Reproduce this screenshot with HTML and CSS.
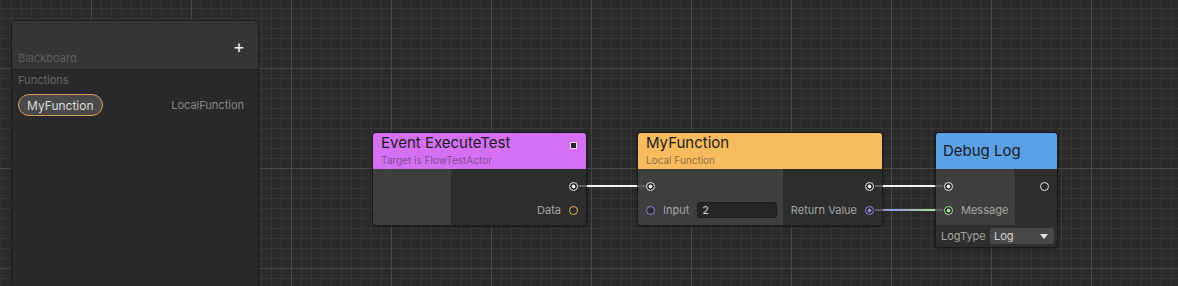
FILE: index.html
```html
<!DOCTYPE html>
<html lang="en">
<head>
  <meta charset="UTF-8" />
  <title>Flow Graph</title>
  <link rel="stylesheet" href="styles.css">
</head>
<body>
  <div class="graph">

    <!-- blackboard panel -->
    <aside class="blackboard">
      <div class="bb-header">
        <span class="bb-title">Blackboard</span>
        <span class="bb-add">+</span>
      </div>
      <div class="bb-body">
        <div class="bb-section">Functions</div>
        <div class="bb-row">
          <span class="bb-pill">MyFunction</span>
          <span class="bb-type">LocalFunction</span>
        </div>
      </div>
    </aside>

    <!-- nodes -->
    <div class="node node-event">
      <div class="node-header">
        <div class="titles">
          <div class="node-title">Event ExecuteTest</div>
          <div class="node-sub">Target is FlowTestActor</div>
        </div>
        <span class="node-flag"></span>
      </div>
      <div class="node-body">
        <div class="col col-in"></div>
        <div class="col col-out">
          <div class="row"><span class="port exec linked"></span></div>
          <div class="row"><span class="label">Data</span><span class="port yellow"></span></div>
        </div>
      </div>
    </div>

    <div class="node node-func">
      <div class="node-header">
        <div class="titles">
          <div class="node-title">MyFunction</div>
          <div class="node-sub">Local Function</div>
        </div>
      </div>
      <div class="node-body">
        <div class="col col-in">
          <div class="row"><span class="port exec linked"></span></div>
          <div class="row">
            <span class="port purple"></span><span class="label">Input</span>
            <span class="field">2</span>
          </div>
        </div>
        <div class="col col-out">
          <div class="row"><span class="port exec linked"></span></div>
          <div class="row"><span class="label">Return Value</span><span class="port purple linked"></span></div>
        </div>
      </div>
    </div>

    <div class="node node-debug">
      <div class="node-header">
        <div class="node-title">Debug Log</div>
      </div>
      <div class="node-body">
        <div class="col col-in">
          <div class="row"><span class="port exec linked"></span></div>
          <div class="row"><span class="port green linked"></span><span class="label">Message</span></div>
        </div>
        <div class="col col-out">
          <div class="row"><span class="port exec"></span></div>
        </div>
      </div>
      <div class="node-footer">
        <span class="label">LogType</span>
        <span class="select">Log
          <svg width="8" height="5" viewBox="0 0 8 5"><polygon points="0,0 8,0 4,5" fill="#e6e6e6"/></svg>
        </span>
      </div>
    </div>

    <!-- wires -->
    <svg class="wires" width="1178" height="286">
      <defs>
        <linearGradient id="wire-grad" gradientUnits="userSpaceOnUse" x1="883" y1="0" x2="935" y2="0">
          <stop offset="0" stop-color="#948ae6"/>
          <stop offset="1" stop-color="#a6e2a6"/>
        </linearGradient>
      </defs>
      <g stroke-width="2">
        <line x1="578" y1="186" x2="587" y2="186" stroke="#5e5e5e"/>
        <line x1="587" y1="186" x2="637" y2="186" stroke="#f2f2f2"/>
        <line x1="637" y1="186" x2="646" y2="186" stroke="#5e5e5e"/>

        <line x1="875" y1="186" x2="883" y2="186" stroke="#5e5e5e"/>
        <line x1="883" y1="186" x2="935" y2="186" stroke="#f2f2f2"/>
        <line x1="935" y1="186" x2="943" y2="186" stroke="#5e5e5e"/>

        <line x1="875" y1="210" x2="883" y2="210" stroke="#5e5e5e"/>
        <line x1="883" y1="210" x2="935" y2="210" stroke="url(#wire-grad)"/>
        <line x1="935" y1="210" x2="943" y2="210" stroke="#5e5e5e"/>
      </g>
    </svg>
  </div>
</body>
</html>
```
FILE: styles.css
```css
/* --- base --- */
body {
  margin: 0;
  font-family: Inter, "Noto Sans", sans-serif;
  background: #2a2a2a;
  overflow: hidden;
}

/* --- canvas with grid --- */
.graph {
  position: relative;
  width: 1178px;
  height: 286px;
  overflow: hidden;
  background-color: #2a2a2a;
  background-image:
    linear-gradient(to right, #474747 1px, transparent 1px),
    linear-gradient(to bottom, #474747 1px, transparent 1px),
    linear-gradient(to right, #373737 1px, transparent 1px),
    linear-gradient(to bottom, #373737 1px, transparent 1px);
  background-size: 100px 100px, 100px 100px, 10px 10px, 10px 10px;
  background-position: 91px 0, 0 68px, 1px 0, 0 8px;
}

/* --- blackboard --- */
.blackboard {
  position: absolute;
  left: 11px;
  top: 20px;
  width: 248px;
  height: 290px;
  box-sizing: border-box;
  background: #292929;
  border: 1px solid #1c1c1c;
  border-radius: 5px;
  overflow: hidden;
}
.bb-header {
  height: 48px;
  display: flex;
  justify-content: space-between;
  align-items: center;
  padding: 0 13px 0 6px;
  background: #353535;
  border-bottom: 1px solid #1e1e1e;
}
.bb-title {
  align-self: flex-end;
  margin-bottom: 4px;
  font-size: 11px;
  color: #5e5e5e;
}
.bb-add {
  color: #f0f0f0;
  font-size: 18px;
  line-height: 1;
  margin-top: 4px;
}
.bb-body {
  padding: 3px 14px 0 6px;
}
.bb-section {
  font-size: 11px;
  line-height: 14px;
  color: #686868;
}
.bb-row {
  display: flex;
  justify-content: space-between;
  align-items: center;
  margin-top: 7px;
}
.bb-pill {
  height: 22px;
  box-sizing: border-box;
  display: inline-flex;
  align-items: center;
  padding: 0 8px;
  border: 1px solid #d3a052;
  border-radius: 11px;
  background: #4a4a4a;
  color: #dadada;
  font-size: 12px;
}
.bb-type {
  font-size: 11px;
  color: #888;
}

/* --- nodes --- */
.node {
  position: absolute;
  top: 132px;
  box-sizing: border-box;
  border: 1px solid #191919;
  border-radius: 4px;
  overflow: hidden;
  box-shadow: 0 1px 3px rgba(0,0,0,0.35);
}
.node-event { left: 372px; width: 215px; }
.node-func  { left: 637px; width: 246px; }
.node-debug { left: 935px; width: 123px; }

.node-header {
  height: 36px;
  box-sizing: border-box;
  display: flex;
  justify-content: space-between;
  align-items: flex-start;
  padding: 1px 9px 0 8px;
  color: #1b1b1b;
}
.node-event .node-header { background: #d570f5; }
.node-func .node-header  { background: #f8bb5e; }
.node-debug .node-header { background: #5ba1e8; align-items: center; padding-top: 0; padding-left: 7px; }

.node-title {
  font-size: 15px;
  line-height: 18px;
}
.node-sub {
  margin-top: 2px;
  font-size: 10px;
  line-height: 13px;
  color: rgba(40,40,40,0.55);
}
.node-flag {
  width: 7px;
  height: 7px;
  box-sizing: border-box;
  margin-top: 8px;
  background: #242424;
  border: 1px solid #f4dcf8;
}

.node-body {
  display: flex;
}
.col {
  padding: 5px 0 3px;
  min-height: 48px;
}
.col-in {
  background: rgba(66,66,66,0.85);
  padding-left: 8px;
}
.col-out {
  flex: 1;
  background: rgba(46,46,46,0.92);
  padding-right: 8px;
}
.node-event .col-in { width: 78px; box-sizing: border-box; }
.node-func .col-in  { width: 145px; box-sizing: border-box; }
.node-debug .col-in { width: 79px; box-sizing: border-box; }

.row {
  height: 24px;
  display: flex;
  align-items: center;
  gap: 8px;
}
.col-out .row { justify-content: flex-end; }

.label {
  font-size: 11px;
  color: #a4a4a4;
}
.field {
  width: 80px;
  height: 16px;
  box-sizing: border-box;
  padding: 0 4px;
  display: flex;
  align-items: center;
  background: #252525;
  border: 1px solid #1a1a1a;
  border-radius: 3px;
  font-size: 11px;
  color: #cfcfcf;
}

/* --- ports --- */
.port {
  width: 9px;
  height: 9px;
  box-sizing: border-box;
  border-radius: 50%;
  border: 1.5px solid #e8e8e8;
  background: #2a2a2a;
  flex: none;
}
.port.yellow { border-color: #e6c050; }
.port.purple { border-color: #8e84e6; }
.port.green  { border-color: #a2e2a2; }
.port.linked { background: radial-gradient(circle, #e8e8e8 0 1.7px, #2a2a2a 2.2px); }
.port.purple.linked { background: radial-gradient(circle, #8e84e6 0 1.7px, #2a2a2a 2.2px); }
.port.green.linked  { background: radial-gradient(circle, #a2e2a2 0 1.7px, #2a2a2a 2.2px); }

/* --- debug footer --- */
.node-footer {
  display: flex;
  align-items: center;
  justify-content: space-between;
  padding: 3px 3px 3px 5px;
  background: rgba(46,46,46,0.95);
}
.select {
  width: 64px;
  height: 16px;
  box-sizing: border-box;
  display: flex;
  align-items: center;
  justify-content: space-between;
  padding: 0 6px 0 4px;
  background: #484848;
  border-radius: 3px;
  font-size: 11px;
  color: #d6d6d6;
}

/* --- wires --- */
.wires {
  position: absolute;
  left: 0;
  top: 0;
  pointer-events: none;
}
```
